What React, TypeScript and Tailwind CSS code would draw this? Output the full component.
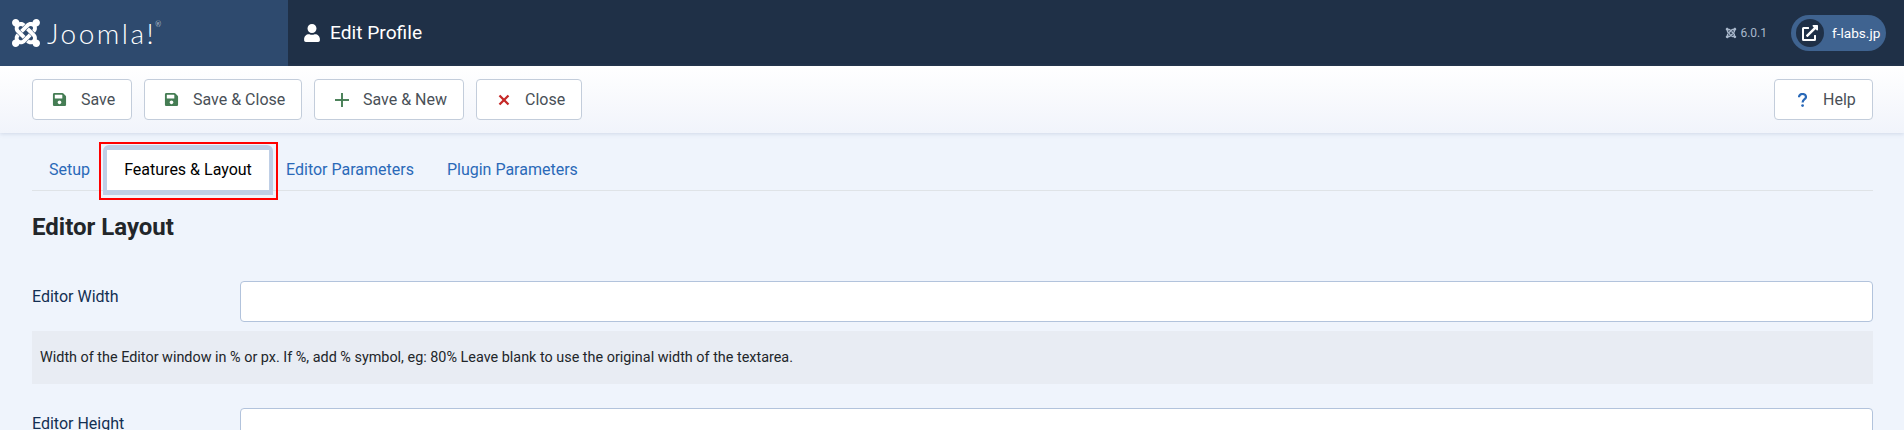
import { FaExternalLinkAlt, FaJoomla, FaSave, FaUser } from "react-icons/fa";
import { Plus, X } from "lucide-react";
import type { ReactNode } from "react";

function ToolButton({ icon, label, className }: { icon: ReactNode; label: string; className: string }) {
  return (
    <button className={`flex h-[41px] items-center rounded-[4px] border border-[#c3cddb] bg-white text-base text-[#495057] ${className}`}>
      <span className="flex w-[16px] justify-center">{icon}</span>
      <span className="ml-[13px]">{label}</span>
    </button>
  );
}

function Field({ label, help }: { label: string; help?: string }) {
  return (
    <div className="mb-[24px]">
      <div className="flex items-start">
        <label className="w-[208px] shrink-0 pt-[4px] text-base leading-[24px] text-[#132f53]">{label}</label>
        <input className="h-[41px] flex-1 rounded-[4px] border border-[#b2c3dc] bg-white" />
      </div>
      {help && (
        <div className="mt-[9px] flex h-[53px] items-center bg-[#e8ecf3] px-[8px] text-[14.4px] text-[#22262a]">
          {help}
        </div>
      )}
    </div>
  );
}

export default function App() {
  return (
    <div className="h-screen overflow-hidden bg-[#eff4fc] font-['Roboto',sans-serif]">
      {/* header */}
      <header className="flex h-[66px] items-center bg-[#1f3047] text-white">
        <div className="flex h-full w-[288px] items-center bg-[#2e4a6e] pl-[10px]">
          <FaJoomla className="h-[32px] w-[32px]" />
          <span className="ml-[5px] flex items-start font-['Lato',sans-serif] text-[28px] leading-none font-light tracking-[2.5px]">
            Joomla!
            <span className="mt-[2px] -ml-[1px] text-[7px] leading-none tracking-normal">®</span>
          </span>
        </div>
        <div className="ml-[15px] flex items-center">
          <FaUser className="h-[18px] w-[18px]" />
          <h1 className="ml-[9px] text-[19.2px]">Edit Profile</h1>
        </div>
        <div className="ml-auto flex items-center pr-[18px]">
          <FaJoomla className="h-[12px] w-[12px] text-[#a9b8cc]" />
          <span className="ml-[3px] text-xs text-[#a9b8cc]">6.0.1</span>
          <a className="ml-[24px] flex h-[36px] w-[95px] items-center rounded-full bg-[#3f6390] pl-[5px]">
            <span className="flex h-[28px] w-[28px] items-center justify-center rounded-full bg-[#1f3047]">
              <FaExternalLinkAlt className="h-[16px] w-[16px]" />
            </span>
            <span className="ml-[8px] text-[13.6px]">f-labs.jp</span>
          </a>
        </div>
      </header>

      {/* toolbar */}
      <div className="flex h-[67px] items-center bg-gradient-to-b from-white to-[#f1f4fb] px-[32px] pr-[31px] shadow-[0_1px_4px_rgba(120,140,180,0.25)]">
        <div className="flex gap-[12px]">
          <ToolButton icon={<FaSave className="h-[15px] w-[15px] -translate-x-[1px] text-[#457d54]" />} label="Save" className="w-[100px] pl-[19px]" />
          <ToolButton icon={<FaSave className="h-[15px] w-[15px] -translate-x-[1px] text-[#457d54]" />} label="Save & Close" className="w-[158px] pl-[19px]" />
          <ToolButton icon={<Plus size={24} strokeWidth={1.9} strokeLinecap="butt" className="shrink-0 text-[#457d54]" />} label="Save & New" className="w-[150px] pl-[19px]" />
          <ToolButton icon={<X size={18} strokeWidth={3} strokeLinecap="butt" className="shrink-0 text-[#c52827]" />} label="Close" className="w-[106px] pl-[19px]" />
        </div>
        <ToolButton
          icon={
            <svg viewBox="0 0 9 14" className="h-[14px] w-[9px] text-[#2a69b8]" fill="none">
              <path d="M1 4.2C1 2.2 2.6 1 4.5 1S8 2.2 8 4C8 6.2 4.6 6.2 4.6 9.4" stroke="currentColor" strokeWidth="2.2" />
              <circle cx="4.6" cy="12.6" r="1.4" fill="currentColor" />
            </svg>
          }
          label="Help"
          className="ml-auto w-[99px] pl-[19px]"
        />
      </div>

      <main className="px-[32px] pr-[31px]">
        {/* tabs */}
        <div className="mt-[12px] flex h-[46px] items-end border-b border-[#dfe3e7] pl-[17px] text-base text-[#2a69b8]">
          <span className="mb-[8px]">Setup</span>
          <div className="relative z-10 ml-[13px] -mb-[5px] h-[50px] w-[170px] rounded-t-[6px] border-x-[4px] border-y-[5px] border-[#bfcfe6] text-black">
            <div className="flex h-full items-center justify-center bg-white pb-[1px]">Features &amp; Layout</div>
            <div className="absolute top-[-8px] left-[-8px] h-[58px] w-[178.5px] border-[2px] border-[#f00]" />
          </div>
          <span className="mb-[8px] ml-[13px]">Editor Parameters</span>
          <span className="mb-[8px] ml-[33px]">Plugin Parameters</span>
        </div>

        <h2 className="mt-[22px] mb-[39px] text-2xl leading-[29px] font-bold text-[#22262a]">Editor Layout</h2>

        <Field
          label="Editor Width"
          help="Width of the Editor window in % or px. If %, add % symbol, eg: 80% Leave blank to use the original width of the textarea."
        />
        <Field label="Editor Height" />
      </main>
    </div>
  );
}
